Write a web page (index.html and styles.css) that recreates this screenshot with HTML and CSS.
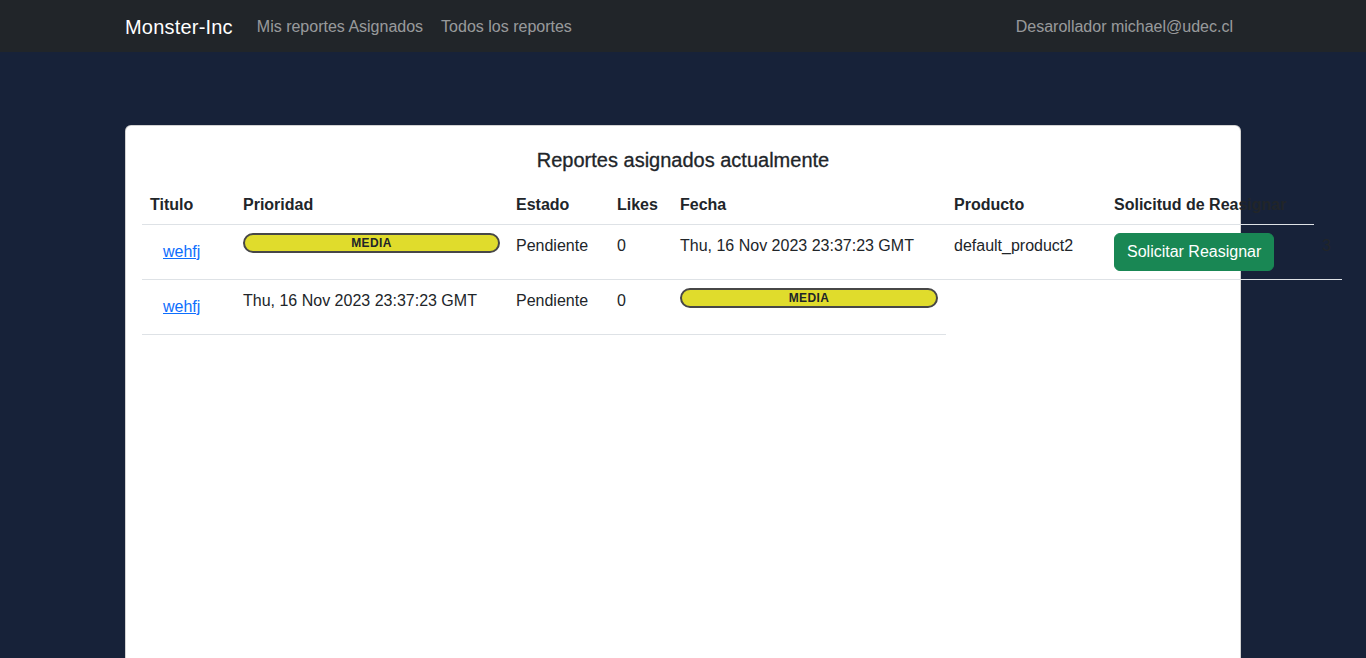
FILE: index.html
```html
<!DOCTYPE html>
<html lang="es">
<head>
<meta charset="utf-8">
<title>Monster-Inc</title>
<link rel="stylesheet" href="styles.css">
</head>
<body>
<nav class="navbar">
  <div class="nav-inner">
    <div class="nav-left">
      <a class="brand" href="#">Monster-Inc</a>
      <a class="nav-link" href="#">Mis reportes Asignados</a>
      <a class="nav-link" href="#">Todos los reportes</a>
    </div>
    <span class="nav-link user">Desarollador michael@udec.cl</span>
  </div>
</nav>
<main class="container">
  <section class="card">
    <h5 class="card-title">Reportes asignados actualmente</h5>
    <table class="table">
      <colgroup>
        <col class="c-titulo"><col class="c-prio"><col class="c-estado"><col class="c-likes"><col class="c-fecha"><col class="c-prod"><col class="c-sol"><col class="c-extra">
      </colgroup>
      <thead>
        <tr>
          <th>Titulo</th><th>Prioridad</th><th>Estado</th><th>Likes</th><th>Fecha</th><th>Producto</th><th>Solicitud de Reasignar</th>
        </tr>
      </thead>
      <tbody>
        <tr>
          <td><a class="btn-link" href="#">wehfj</a></td>
          <td><span class="badge">MEDIA</span></td>
          <td>Pendiente</td>
          <td>0</td>
          <td>Thu, 16 Nov 2023 23:37:23 GMT</td>
          <td>default_product2</td>
          <td><button class="btn-success">Solicitar Reasignar</button></td>
          <td>3</td>
        </tr>
        <tr>
          <td><a class="btn-link" href="#">wehfj</a></td>
          <td>Thu, 16 Nov 2023 23:37:23 GMT</td>
          <td>Pendiente</td>
          <td>0</td>
          <td><span class="badge">MEDIA</span></td>
        </tr>
      </tbody>
    </table>
  </section>
</main>
</body>
</html>
```
FILE: styles.css
```css
* { box-sizing: border-box; }
html, body { margin: 0; height: 100%; overflow: hidden; }
body {
  background: #172239;
  font-family: "Liberation Sans", Arial, sans-serif;
  font-size: 16px;
  line-height: 24px;
  color: #212529;
}
.navbar {
  background: #212529;
  height: 52px;
  display: flex;
  align-items: center;
  padding-top: 2px;
}
.nav-inner {
  width: 1116px;
  margin: 0 auto;
  display: flex;
  justify-content: space-between;
  align-items: center;
}
.nav-left { display: flex; align-items: center; }
.brand {
  color: #fff;
  font-size: 20px;
  text-decoration: none;
  margin-right: 16px;
  letter-spacing: 0.2px;
}
.nav-link {
  color: rgba(255,255,255,0.55);
  text-decoration: none;
  padding: 0 8px;
}
.nav-left .nav-link:last-child { padding-left: 10px; }
.user { padding-right: 8px; }
.container {
  width: 1116px;
  margin: 0 auto;
  padding-top: 73px;
}
.card {
  background: #fff;
  border: 1px solid rgba(0,0,0,0.175);
  border-radius: 6px;
  height: 620px;
  padding: 16px;
}
.card-title {
  margin: 6px 0 12px;
  font-size: 20px;
  line-height: 24px;
  font-weight: 500;
  text-align: center;
  -webkit-text-stroke: 0.3px #212529;
}
.table {
  border-collapse: collapse;
  table-layout: fixed;
  width: 1200px;
}
.c-titulo { width: 93px; }
.c-prio { width: 273px; }
.c-estado { width: 101px; }
.c-likes { width: 63px; }
.c-fecha { width: 274px; }
.c-prod { width: 160px; }
.c-sol { width: 208px; }
.c-extra { width: 28px; }
th, td {
  padding: 9px 8px 7px;
  text-align: left;
  vertical-align: top;
  border-bottom: 1px solid #dee2e6;
  white-space: nowrap;
}
th { font-weight: 700; }
.btn-link {
  display: inline-block;
  margin-top: -1px;
  margin-bottom: 1px;
  padding: 7px 13px;
  color: #0d6efd;
  text-decoration: underline;
}
.badge {
  display: block;
  width: 100%;
  margin-top: -1px;
  background: #e0dc2c;
  border: 2px solid #474747;
  border-radius: 10px;
  font-size: 12px;
  line-height: 16px;
  font-weight: 700;
  text-align: center;
  color: #212529;
  letter-spacing: 0.4px;
}
.btn-success {
  display: block;
  margin-top: -1px;
  margin-bottom: 1px;
  background: #198754;
  color: #fff;
  border: 1px solid #198754;
  border-radius: 6px;
  padding: 6px 12px;
  font-family: inherit;
  font-size: 16px;
  line-height: 24px;
}
```
